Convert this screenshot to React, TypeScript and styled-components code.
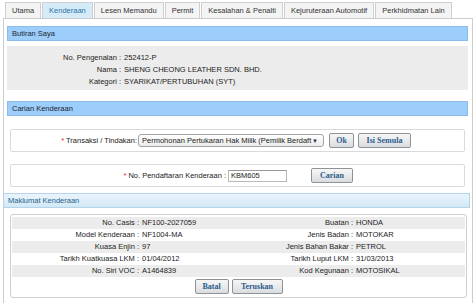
import React from "react";
import styled, { createGlobalStyle } from "styled-components";

const GlobalStyle = createGlobalStyle`
  html, body { margin: 0; padding: 0; background: #fff; }
  body {
    font-family: "Liberation Sans", Arial, sans-serif;
    font-size: 7.5px;
    color: #222;
  }
  * { box-sizing: border-box; }
`;

const Page = styled.div`
  width: 474px;
  height: 303px;
  padding: 2px 1px 0 3px;
  overflow: hidden;
`;

const TabBar = styled.div`
  display: flex;
  gap: 1px;
  padding-left: 2px;
  height: 16px;
  align-items: flex-end;
`;

const Tab = styled.div<{ $active?: boolean }>`
  height: 16px;
  line-height: 15px;
  padding: 0 6px;
  border: 1px solid #cfcfcf;
  border-bottom: none;
  background: ${(p) => (p.$active ? "#d6ebf8" : "#f4f4f4")};
  color: ${(p) => (p.$active ? "#2a73a6" : "#333")};
  white-space: nowrap;
`;

const Panel = styled.div`
  border: 1px solid #cdcdcd;
  border-bottom: none;
  padding: 7px 4px 0 3px;
  height: 285px;
`;

const SectionHeader = styled.div`
  height: 15px;
  line-height: 13px;
  padding-left: 4px;
  background: #9dcdfb;
  border: 1px solid #8cbde9;
  color: #1c2530;
`;

const InfoBox = styled.div`
  margin-top: 5px;
  background: #ececec;
  padding: 6px 0 2px;
  display: grid;
  grid-template-columns: 114px 1fr;
  grid-auto-rows: 12px;
  line-height: 12px;
`;

const Label = styled.div`
  text-align: right;
  white-space: nowrap;
`;

const Value = styled.div`
  padding-left: 3px;
  white-space: nowrap;
`;

const Spacer = styled.div<{ $h: number }>`
  height: ${(p) => p.$h}px;
`;

const FormRow = styled.div`
  margin: 0 3px;
  height: 23px;
  border: 1px solid #dadada;
  border-radius: 2px;
  display: flex;
  align-items: center;
`;

const FormLabel = styled.div<{ $w: number }>`
  width: ${(p) => p.$w}px;
  text-align: right;
  white-space: nowrap;
  padding-right: 1px;
`;

const Req = styled.span`
  color: #e0281f;
`;

const SelectBox = styled.div`
  width: 186px;
  height: 13px;
  border: 1px solid #a3a3a3;
  border-radius: 3px;
  background: linear-gradient(#ffffff, #ececec);
  display: flex;
  align-items: center;
  justify-content: space-between;
  padding: 0 3px;
  margin-right: 5px;
`;

const SelectText = styled.span`
  white-space: nowrap;
  line-height: 11px;
`;

const Arrow = styled.span`
  font-size: 6px;
  color: #333;
  margin-right: 2px;
`;

const Button = styled.button<{ $w: number }>`
  width: ${(p) => p.$w}px;
  height: 15px;
  padding: 0;
  border: 1px solid #8e9396;
  border-radius: 2px;
  background: linear-gradient(#f7f7f7, #d9dcdf);
  font-family: "Liberation Serif", "Times New Roman", serif;
  font-weight: bold;
  font-size: 8px;
  color: #2d5c8b;
  line-height: 13px;
  cursor: pointer;
`;

const ButtonGroup = styled.div<{ $gap: number }>`
  display: flex;
  align-items: center;
  gap: ${(p) => p.$gap}px;
`;

const TextInput = styled.div`
  width: 59px;
  height: 12px;
  border: 1px solid #b9b9b9;
  border-top-color: #999;
  background: #fff;
  padding-left: 2px;
  line-height: 10px;
  margin-left: 1px;
  margin-right: 24px;
`;

const SubHeader = styled.div`
  margin: 6px -2px 0 -4px;
  height: 15px;
  line-height: 13px;
  padding-left: 4px;
  background: linear-gradient(#eaf5fc, #d2e8f5);
  border: 1px solid #b3d4ea;
  color: #1f5f8c;
`;

const DetailBox = styled.div`
  margin: 6px 1px 0 3px;
  border: 1px solid #cfcfcf;
  border-radius: 3px;
  padding: 2px 1px 3px;
`;

const DetailRow = styled.div<{ $shade: boolean }>`
  display: grid;
  grid-template-columns: 127px 97px 117px 1fr;
  height: 12px;
  line-height: 12px;
  background: ${(p) => (p.$shade ? "#ececec" : "transparent")};
`;

const DetailActions = styled.div`
  display: flex;
  justify-content: center;
  gap: 3px;
  padding-top: 2px;
`;

const tabs = [
  "Utama",
  "Kenderaan",
  "Lesen Memandu",
  "Permit",
  "Kesalahan & Penalti",
  "Kejuruteraan Automotif",
  "Perkhidmatan Lain",
];

const details: [string, string, string, string][] = [
  ["No. Casis :", "NF100-2027059", "Buatan :", "HONDA"],
  ["Model Kenderaan :", "NF1004-MA", "Jenis Badan :", "MOTOKAR"],
  ["Kuasa Enjin :", "97", "Jenis Bahan Bakar :", "PETROL"],
  ["Tarikh Kuatkuasa LKM :", "01/04/2012", "Tarikh Luput LKM :", "31/03/2013"],
  ["No. Siri VOC :", "A1464839", "Kod Kegunaan :", "MOTOSIKAL"],
];

export default function App() {
  return (
    <Page>
      <GlobalStyle />
      <TabBar>
        {tabs.map((t) => (
          <Tab key={t} $active={t === "Kenderaan"}>
            {t}
          </Tab>
        ))}
      </TabBar>
      <Panel>
        <SectionHeader>Butiran Saya</SectionHeader>
        <InfoBox>
          <Label>No. Pengenalan :</Label>
          <Value>252412-P</Value>
          <Label>Nama :</Label>
          <Value>SHENG CHEONG LEATHER SDN. BHD.</Value>
          <Label>Kategori :</Label>
          <Value>SYARIKAT/PERTUBUHAN (SYT)</Value>
        </InfoBox>
        <Spacer $h={11} />
        <SectionHeader>Carian Kenderaan</SectionHeader>
        <Spacer $h={13} />
        <FormRow>
          <FormLabel $w={127}>
            <Req>*</Req> Transaksi / Tindakan:
          </FormLabel>
          <SelectBox>
            <SelectText>Permohonan Pertukaran Hak Milik (Pemilik Berdaft</SelectText>
            <Arrow>▼</Arrow>
          </SelectBox>
          <ButtonGroup $gap={4}>
            <Button $w={25}>Ok</Button>
            <Button $w={53}>Isi Semula</Button>
          </ButtonGroup>
        </FormRow>
        <Spacer $h={12} />
        <FormRow>
          <FormLabel $w={216}>
            <Req>*</Req> No. Pendaftaran Kenderaan :
          </FormLabel>
          <TextInput>KBM605</TextInput>
          <Button $w={42}>Carian</Button>
        </FormRow>
        <SubHeader>Maklumat Kenderaan</SubHeader>
        <DetailBox>
          {details.map((d, i) => (
            <DetailRow key={d[0]} $shade={i % 2 === 0}>
              <Label>{d[0]}</Label>
              <Value>{d[1]}</Value>
              <Label>{d[2]}</Label>
              <Value>{d[3]}</Value>
            </DetailRow>
          ))}
          <DetailActions>
            <Button $w={34}>Batal</Button>
            <Button $w={51}>Teruskan</Button>
          </DetailActions>
        </DetailBox>
      </Panel>
    </Page>
  );
}
